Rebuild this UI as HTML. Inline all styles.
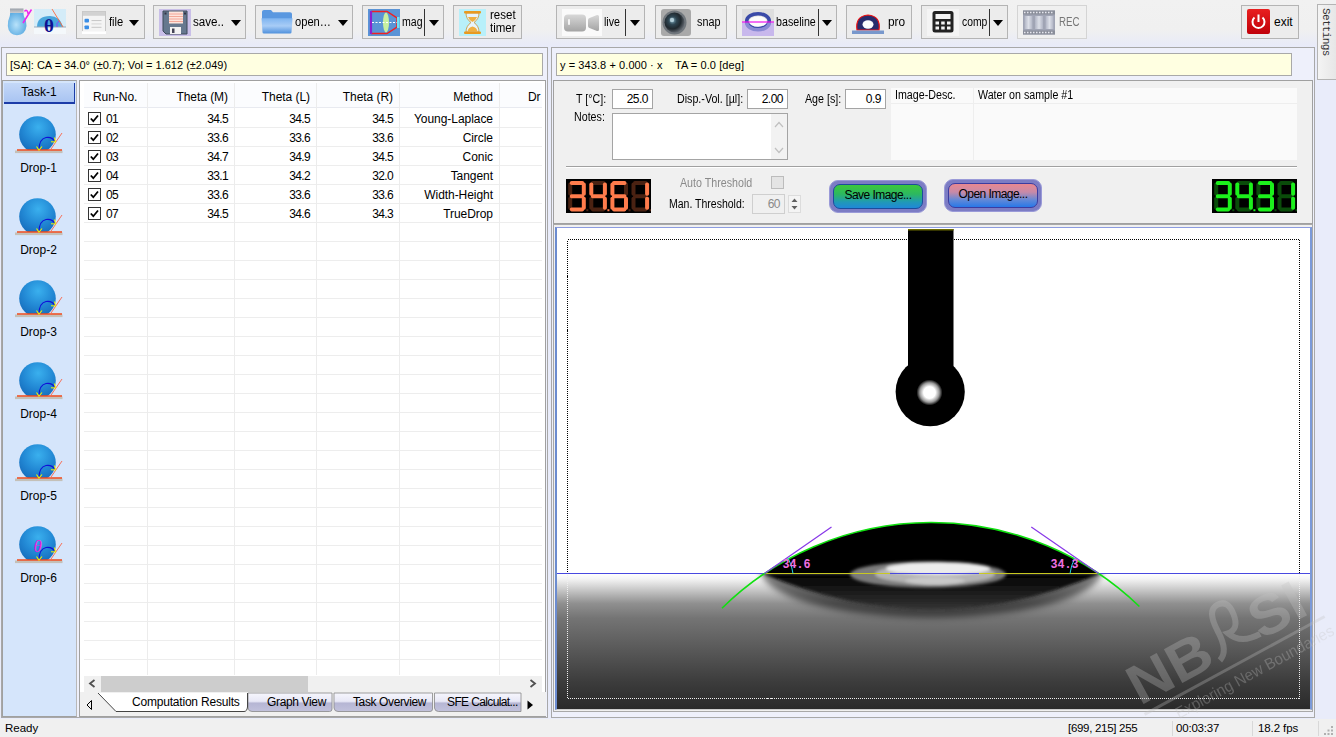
<!DOCTYPE html>
<html><head><meta charset="utf-8">
<style>
*{box-sizing:border-box;margin:0;padding:0}
html,body{width:1336px;height:737px;overflow:hidden}
body{position:relative;background:#e9ecfa;font-family:"Liberation Sans",sans-serif;font-size:12px;color:#000}
.abs{position:absolute}
#toolbar{position:absolute;left:0;top:0;width:1336px;height:47px;background:linear-gradient(#f1f1f1 0,#f0f0f0 30px,#e9ebf7 44px,#e8ebfa 47px)}
.tb{position:absolute;top:5px;height:34px;border:1px solid #b4b4b4;background:#ececec;font-size:12px}
.tb .lbl{position:absolute;top:9px;white-space:nowrap;transform-origin:left top;letter-spacing:0}
.tb .arr{position:absolute;top:14px;width:0;height:0;border-left:5px solid transparent;border-right:5px solid transparent;border-top:6px solid #000}
.tb .sep{position:absolute;top:3px;width:1px;height:27px;background:#333}
.tb svg{position:absolute}
/* panels */
.panel{position:absolute;background:#f0f0f0;border:1px solid #a0a0a0}
.n{letter-spacing:-0.65px}
.cb{width:13px;height:13px;border:1px solid #333;background:#fff}
.lb{font-size:12px;white-space:nowrap;transform:scaleX(0.89);transform-origin:left top}
.inp{height:20px;background:#fff;border:1px solid #a4a4a4;font-size:12px;line-height:18px;text-align:right;padding-right:4px;letter-spacing:-0.500px}
.ybox{position:absolute;background:#ffffe1;border:1px solid #a9a9a9;font-size:11px;line-height:23px;padding-left:3px;white-space:nowrap}
#status{position:absolute;left:0;top:719px;width:1336px;height:18px;background:#f0f0f0;font-size:11.5px}
</style></head><body>
<div id="toolbar"></div>
<!-- app icons -->
<svg class="abs" style="left:6px;top:6px" width="62" height="32" viewBox="0 0 62 32">
 <defs>
  <radialGradient id="gdrop" cx="0.45" cy="0.55" r="0.6"><stop offset="0" stop-color="#b8e2fa"/><stop offset="1" stop-color="#56a8e0"/></radialGradient>
  <linearGradient id="gcap" x1="0" y1="0" x2="0" y2="1"><stop offset="0" stop-color="#9aa0a8"/><stop offset="1" stop-color="#c8ccd2"/></linearGradient>
 </defs>
 <path d="M4.300 6 L17.300 6 L17.800 10 Q20.800 15 20.500 20 Q19.500 28.500 11 29.300 Q2.500 28.500 1.800 20 Q1.500 15 3.800 10 Z" fill="url(#gdrop)"/>
 <rect x="4" y="2.500" width="13.500" height="4.500" fill="url(#gcap)"/>
 <path d="M17 17 L25.500 3.500 M18.500 5.500 Q20 3 21.500 5.500 L22.500 9" stroke="#ee22ee" stroke-width="1.500" fill="none"/>
 <rect x="28" y="3" width="32" height="24" fill="#d4ecf8"/>
 <rect x="28" y="21" width="32" height="7" fill="#f4f8fb"/>
 <path d="M31 21 Q31 10 44 10 Q54 10 57 21 Z" fill="#4aa6dc"/>
 <path d="M28 21 L60 21" stroke="#9ab" stroke-width="1"/>
 <path d="M46 3 L57 21" stroke="#ff6a3a" stroke-width="0.900"/>
 <path d="M51 21 Q50 17 53 15" stroke="#8844ff" stroke-width="1" fill="none"/>
 <text x="38" y="26" font-family="Liberation Serif" font-size="19" font-weight="bold" fill="#101090">θ</text>
</svg>

<!-- file -->
<div class="tb" style="left:76px;width:69px">
 <svg style="left:5px;top:5px" width="24" height="23" viewBox="0 0 24 24" preserveAspectRatio="none">
  <rect x="0.5" y="0.5" width="23" height="21" fill="#f4f4f4" stroke="#c8c8c8"/>
  <rect x="1" y="1" width="22" height="4" fill="#d2d2d2"/>
  <rect x="0" y="21" width="24" height="3" fill="#fff"/>
  <rect x="2.5" y="8" width="4.5" height="4" rx="1" fill="#3a8ee6"/><rect x="2.5" y="15" width="4.5" height="4" rx="1" fill="#3a8ee6"/>
  <rect x="9.5" y="9.5" width="10" height="1" fill="#c4c4c4"/><rect x="9.5" y="13" width="10" height="1" fill="#d4d4d4"/><rect x="9.5" y="16.5" width="10" height="1" fill="#c4c4c4"/>
 </svg>
 <span class="lbl" style="left:32px;transform:scaleX(0.93)">file</span><span class="arr" style="left:52px"></span>
</div>

<!-- save -->
<div class="tb" style="left:153px;width:93px">
 <svg style="left:5px;top:3px" width="32" height="27" viewBox="0 0 32 27">
  <rect width="32" height="27" fill="#c9bfe8"/>
  <path d="M4 2 L28 2 L28 25 L7 25 L4 22 Z" fill="#66788e" stroke="#3c4858" stroke-width="1"/>
  <rect x="10" y="2.5" width="14" height="12" fill="#fde4dc"/>
  <path d="M10 5h14M10 7.5h14M10 10h14M10 12.500h14" stroke="#f0a090" stroke-width="0.9"/>
  <rect x="11" y="18" width="11" height="7" fill="#f2f2f2"/><rect x="13" y="19.500" width="2.500" height="4.500" fill="#445"/>
  <rect x="5.500" y="3.500" width="2" height="2" fill="#334"/><rect x="25" y="3.500" width="2" height="2" fill="#334"/>
 </svg>
 <span class="lbl" style="left:39px;transform:scaleX(0.97)">save..</span><span class="arr" style="left:77px"></span>
</div>

<!-- open -->
<div class="tb" style="left:255px;width:98px">
 <svg style="left:5px;top:3px" width="32" height="25" viewBox="0 0 32 27" preserveAspectRatio="none">
  <defs><linearGradient id="gfold" x1="0" y1="0" x2="0" y2="1"><stop offset="0" stop-color="#7eb4f0"/><stop offset="0.500" stop-color="#a8ccf6"/><stop offset="1" stop-color="#4e90dc"/></linearGradient></defs>
  <path d="M1 3 Q1 1 3 1 L10 1 L12 3.500 L29 3.500 Q31 3.500 31 5.500 L31 12 L1 12 Z" fill="#5a98e0"/>
  <path d="M0.500 10 L31.500 10 L30.500 25 Q30.500 26.500 29 26.500 L3 26.500 Q1.500 26.500 1.500 25 Z" fill="url(#gfold)"/>
 </svg>
 <span class="lbl" style="left:39px;transform:scaleX(0.93)">open…</span><span class="arr" style="left:82px"></span>
</div>

<!-- mag -->
<div class="tb" style="left:362px;width:82px">
 <svg style="left:5px;top:3px" width="32" height="27" viewBox="0 0 32 27">
  <rect width="32" height="27" fill="#5a94d6"/>
  <path d="M3 2.500 L19 2.500 L29 9 L29 18 L19 24.500 L3 24.500" fill="none" stroke="#f02020" stroke-width="1.400"/>
  <path d="M3 2 L3 25" stroke="#8a20d0" stroke-width="2.200"/>
  <ellipse cx="18" cy="13.500" rx="3" ry="10" fill="#c8f0a0"/>
  <path d="M4 13.500 L30 13.500" stroke="#fff" stroke-width="1" stroke-dasharray="2 1.500"/>
  <rect x="29" y="8" width="2.500" height="11" fill="#70e4f4"/>
 </svg>
 <span class="lbl" style="left:39px;transform:scaleX(0.88)">mag</span><span class="sep" style="left:61px"></span><span class="arr" style="left:66px"></span>
</div>

<!-- reset timer -->
<div class="tb" style="left:453px;width:69px">
 <svg style="left:5px;top:3px" width="27" height="27" viewBox="0 0 27 27">
  <rect width="27" height="27" fill="#b8f0fa"/>
  <path d="M7 4 L20 4 Q20 10 15 13.500 Q20 17 20 23 L7 23 Q7 17 12 13.500 Q7 10 7 4Z" fill="#e8f4fa" stroke="#c89030" stroke-width="0.800"/>
  <path d="M9 8 L18 8 Q17 11 13.500 13 Q10 11 9 8Z" fill="#f0b040"/>
  <path d="M8.500 22.500 Q9 18.500 13.500 17.500 Q18 18.500 18.500 22.500Z" fill="#f0b040"/>
  <rect x="5" y="2" width="17" height="2.500" rx="1" fill="#e89a20"/><rect x="5" y="22.500" width="17" height="2.500" rx="1" fill="#e89a20"/>
 </svg>
 <span class="lbl" style="left:36px;top:3px;line-height:12.5px;text-align:center;transform:scaleX(0.96)">reset<br>timer</span>
</div>

<!-- live -->
<div class="tb" style="left:556px;width:89px">
 <svg style="left:5px;top:3px" width="40" height="27" viewBox="0 0 40 27">
  <defs><linearGradient id="gcam" x1="0" y1="0" x2="0" y2="1"><stop offset="0" stop-color="#d8d8d8"/><stop offset="1" stop-color="#a4a4a4"/></linearGradient></defs>
  <rect width="40" height="27" fill="#fafafa"/>
  <rect x="2" y="5.500" width="22" height="17" rx="4" fill="url(#gcam)"/>
  <path d="M26 11 Q26 9.500 27.500 9 L35 6 Q37 5.500 37 7.500 L37 20.500 Q37 22.500 35 22 L27.500 19 Q26 18.500 26 17Z" fill="url(#gcam)"/>
  <rect x="6" y="10" width="2" height="6" rx="1" fill="#f4f4f4"/>
 </svg>
 <span class="lbl" style="left:47px;transform:scaleX(0.89)">live</span><span class="sep" style="left:68px"></span><span class="arr" style="left:73px"></span>
</div>

<!-- snap -->
<div class="tb" style="left:655px;width:72px">
 <svg style="left:5px;top:3px" width="30" height="27" viewBox="0 0 30 27">
  <defs><radialGradient id="glens" cx="0.400" cy="0.400" r="0.600"><stop offset="0" stop-color="#7aa6b8"/><stop offset="0.350" stop-color="#2e4450"/><stop offset="0.700" stop-color="#20282e"/><stop offset="1" stop-color="#5a6068"/></radialGradient></defs>
  <rect width="30" height="27" rx="3" fill="#a9a9a9"/>
  <circle cx="13.500" cy="13.500" r="12" fill="#70767c"/>
  <circle cx="13.500" cy="13.500" r="10" fill="url(#glens)"/>
  <circle cx="11" cy="11" r="2.200" fill="#c4dce6" opacity="0.800"/>
 </svg>
 <span class="lbl" style="left:41px;transform:scaleX(0.90)">snap</span>
</div>

<!-- baseline -->
<div class="tb" style="left:736px;width:101px">
 <svg style="left:5px;top:3px" width="32" height="27" viewBox="0 0 32 27">
  <rect width="32" height="27" fill="#dedede"/>
  <rect y="13.500" width="32" height="13.500" fill="#c8b8ec"/>
  <ellipse cx="16" cy="12" rx="11.300" ry="7.300" fill="none" stroke="#3a4aa8" stroke-width="3.500"/>
  <path d="M4.700 13.500 A11.300 7.300 0 0 0 27.300 13.500" fill="none" stroke="#8a8ad4" stroke-width="3.500"/>
  <ellipse cx="16" cy="12.500" rx="8.800" ry="5.200" fill="#fcfcfc"/>
  <path d="M0 13 L32 13" stroke="#ee10ee" stroke-width="1.200"/>
 </svg>
 <span class="lbl" style="left:39px;transform:scaleX(0.89)">baseline</span><span class="sep" style="left:81px"></span><span class="arr" style="left:85px"></span>
</div>

<!-- pro -->
<div class="tb" style="left:846px;width:66px">
 <svg style="left:5px;top:3px" width="32" height="27" viewBox="0 0 32 27">
  <path d="M5 21 Q3 7 16 6 Q29 7 27 21 Z" fill="#282c6c" stroke="#f01010" stroke-width="1.200"/>
  <ellipse cx="16" cy="15.500" rx="5.500" ry="4.200" fill="#fcfcfc"/>
  <rect x="0" y="21.500" width="32" height="3.500" fill="#7898cc"/>
 </svg>
 <span class="lbl" style="left:41px;transform:scaleX(0.99)">pro</span>
</div>

<!-- comp -->
<div class="tb" style="left:921px;width:87px">
 <svg style="left:5px;top:3px" width="32" height="27" viewBox="0 0 32 27">
  <rect width="32" height="27" fill="#f4f4f4"/>
  <rect x="5.500" y="2" width="21" height="21.500" rx="2.500" fill="#222"/>
  <rect x="8.500" y="5" width="15" height="5" fill="#f4f4f4"/>
  <g fill="#f4f4f4"><rect x="8.500" y="12.500" width="3.500" height="3"/><rect x="14.200" y="12.500" width="3.500" height="3"/><rect x="20" y="12.500" width="3.500" height="3"/><rect x="8.500" y="17.500" width="3.500" height="3"/><rect x="14.200" y="17.500" width="3.500" height="3"/><rect x="20" y="17.500" width="3.500" height="3"/></g>
 </svg>
 <span class="lbl" style="left:40px;transform:scaleX(0.86)">comp</span><span class="sep" style="left:67px"></span><span class="arr" style="left:71px"></span>
</div>

<!-- REC -->
<div class="tb" style="left:1017px;width:70px;border-color:#d4d4d4;background:#f0f0f0">
 <svg style="left:5px;top:3px" width="32" height="27" viewBox="0 0 32 27">
  <defs><linearGradient id="gfilm" x1="0" y1="0" x2="1" y2="0"><stop offset="0" stop-color="#b0b4c4"/><stop offset="0.500" stop-color="#dcdfe8"/><stop offset="1" stop-color="#b0b4c4"/></linearGradient></defs>
  <rect x="0" y="1.500" width="32" height="24" fill="#a0a4b4"/>
  <rect x="0" y="1.500" width="32" height="4" fill="#8a8e9a"/><rect x="0" y="21.500" width="32" height="4" fill="#8a8e9a"/>
  <path d="M1 3.500 H31" stroke="#e8e8f0" stroke-width="1.600" stroke-dasharray="1.500 1.500"/><path d="M1 23.500 H31" stroke="#e8e8f0" stroke-width="1.600" stroke-dasharray="1.500 1.500"/>
  <rect x="1.500" y="7" width="8" height="13" fill="url(#gfilm)"/><rect x="12" y="7" width="8" height="13" fill="url(#gfilm)"/><rect x="22.500" y="7" width="8" height="13" fill="url(#gfilm)"/>
 </svg>
 <span class="lbl" style="left:41px;color:#777;transform:scaleX(0.81)">REC</span>
</div>

<!-- exit -->
<div class="tb" style="left:1241px;width:58px">
 <svg style="left:5px;top:3px" width="23" height="27" viewBox="0 0 23 27">
  <defs><linearGradient id="gexit" x1="0" y1="0" x2="0" y2="1"><stop offset="0" stop-color="#e82020"/><stop offset="1" stop-color="#c00008"/></linearGradient></defs>
  <rect width="23" height="25" rx="2" fill="url(#gexit)"/>
  <path d="M7.500 8.500 A6 6 0 1 0 15.500 8.500" fill="none" stroke="#fff" stroke-width="2"/>
  <path d="M11.500 5.500 V13" stroke="#fff" stroke-width="2"/>
 </svg>
 <span class="lbl" style="left:32px;transform:scaleX(1.00)">exit</span>
</div>

<!-- LEFT -->
<div class="panel" style="left:1px;top:47px;width:547px;height:671px;background:#eef0fb;border-color:#a8a8a8"></div>
<div class="ybox" style="left:6px;top:53px;width:537px;height:23px">[SA]: CA = 34.0° (±0.7); Vol = 1.612 (±2.049)</div>
<svg width="0" height="0" style="position:absolute"><defs>
<radialGradient id="gsph" cx="0.520" cy="0.300" r="0.750"><stop offset="0" stop-color="#3ab0ee"/><stop offset="0.550" stop-color="#2288d4"/><stop offset="1" stop-color="#1468b8"/></radialGradient>
<clipPath id="cpS"><rect x="0" y="0" width="50" height="35"/></clipPath></defs></svg>
<div class="abs" style="left:2px;top:80px;width:75px;height:637px;background:#d5e5fb;border:1px solid #a0a0a0;border-right-color:#b8b8b8"></div>
<div class="abs" style="left:4px;top:83px;width:71px;height:21px;background:linear-gradient(#c4d8f8,#a9c4f2);border-bottom:2px solid #1c3ca8;border-right:1px solid #1c3ca8;text-align:center;font-size:12px;line-height:19px">Task-1</div>
<svg class="abs" style="left:14px;top:115px" width="50" height="40" viewBox="0 0 50 40">
<circle cx="23.500" cy="19.500" r="18.300" fill="url(#gsph)" clip-path="url(#cpS)"/>
<rect x="1" y="35.500" width="47.500" height="2.600" fill="#c4c0b8"/>
<path d="M3 35 H48" stroke="#f04818" stroke-width="1.400"/>
<path d="M36 35.500 L48 18" stroke="#f87058" stroke-width="1"/>
<path d="M25 35 Q25 24 32 22.500 Q38 21.500 41 26.500" fill="none" stroke="#1010d8" stroke-width="1.100"/>
<path d="M22.500 31.500 L25 35 L28 31.500 M37 26.800 L41.500 27 L40.500 22.500" fill="none" stroke="#f4f000" stroke-width="1.100"/>
</svg>
<div class="abs" style="left:2px;top:161px;width:73px;text-align:center;font-size:12px">Drop-1</div>
<svg class="abs" style="left:14px;top:197px" width="50" height="40" viewBox="0 0 50 40">
<circle cx="23.500" cy="19.500" r="18.300" fill="url(#gsph)" clip-path="url(#cpS)"/>
<rect x="1" y="35.500" width="47.500" height="2.600" fill="#c4c0b8"/>
<path d="M3 35 H48" stroke="#f04818" stroke-width="1.400"/>
<path d="M36 35.500 L48 18" stroke="#f87058" stroke-width="1"/>
<path d="M25 35 Q25 24 32 22.500 Q38 21.500 41 26.500" fill="none" stroke="#1010d8" stroke-width="1.100"/>
<path d="M22.500 31.500 L25 35 L28 31.500 M37 26.800 L41.500 27 L40.500 22.500" fill="none" stroke="#f4f000" stroke-width="1.100"/>
</svg>
<div class="abs" style="left:2px;top:243px;width:73px;text-align:center;font-size:12px">Drop-2</div>
<svg class="abs" style="left:14px;top:279px" width="50" height="40" viewBox="0 0 50 40">
<circle cx="23.500" cy="19.500" r="18.300" fill="url(#gsph)" clip-path="url(#cpS)"/>
<rect x="1" y="35.500" width="47.500" height="2.600" fill="#c4c0b8"/>
<path d="M3 35 H48" stroke="#f04818" stroke-width="1.400"/>
<path d="M36 35.500 L48 18" stroke="#f87058" stroke-width="1"/>
<path d="M25 35 Q25 24 32 22.500 Q38 21.500 41 26.500" fill="none" stroke="#1010d8" stroke-width="1.100"/>
<path d="M22.500 31.500 L25 35 L28 31.500 M37 26.800 L41.500 27 L40.500 22.500" fill="none" stroke="#f4f000" stroke-width="1.100"/>
</svg>
<div class="abs" style="left:2px;top:325px;width:73px;text-align:center;font-size:12px">Drop-3</div>
<svg class="abs" style="left:14px;top:361px" width="50" height="40" viewBox="0 0 50 40">
<circle cx="23.500" cy="19.500" r="18.300" fill="url(#gsph)" clip-path="url(#cpS)"/>
<rect x="1" y="35.500" width="47.500" height="2.600" fill="#c4c0b8"/>
<path d="M3 35 H48" stroke="#f04818" stroke-width="1.400"/>
<path d="M36 35.500 L48 18" stroke="#f87058" stroke-width="1"/>
<path d="M25 35 Q25 24 32 22.500 Q38 21.500 41 26.500" fill="none" stroke="#1010d8" stroke-width="1.100"/>
<path d="M22.500 31.500 L25 35 L28 31.500 M37 26.800 L41.500 27 L40.500 22.500" fill="none" stroke="#f4f000" stroke-width="1.100"/>
</svg>
<div class="abs" style="left:2px;top:407px;width:73px;text-align:center;font-size:12px">Drop-4</div>
<svg class="abs" style="left:14px;top:443px" width="50" height="40" viewBox="0 0 50 40">
<circle cx="23.500" cy="19.500" r="18.300" fill="url(#gsph)" clip-path="url(#cpS)"/>
<rect x="1" y="35.500" width="47.500" height="2.600" fill="#c4c0b8"/>
<path d="M3 35 H48" stroke="#f04818" stroke-width="1.400"/>
<path d="M36 35.500 L48 18" stroke="#f87058" stroke-width="1"/>
<path d="M25 35 Q25 24 32 22.500 Q38 21.500 41 26.500" fill="none" stroke="#1010d8" stroke-width="1.100"/>
<path d="M22.500 31.500 L25 35 L28 31.500 M37 26.800 L41.500 27 L40.500 22.500" fill="none" stroke="#f4f000" stroke-width="1.100"/>
</svg>
<div class="abs" style="left:2px;top:489px;width:73px;text-align:center;font-size:12px">Drop-5</div>
<svg class="abs" style="left:14px;top:525px" width="50" height="40" viewBox="0 0 50 40">
<circle cx="23.500" cy="19.500" r="18.300" fill="url(#gsph)" clip-path="url(#cpS)"/>
<rect x="1" y="35.500" width="47.500" height="2.600" fill="#c4c0b8"/>
<path d="M3 35 H48" stroke="#f04818" stroke-width="1.400"/>
<path d="M36 35.500 L48 18" stroke="#f87058" stroke-width="1"/>
<path d="M25 35 Q25 24 32 22.500 Q38 21.500 41 26.500" fill="none" stroke="#1010d8" stroke-width="1.100"/>
<path d="M22.500 31.500 L25 35 L28 31.500 M37 26.800 L41.500 27 L40.500 22.500" fill="none" stroke="#f4f000" stroke-width="1.100"/>
<text x="19.500" y="27" font-family="Liberation Serif" font-style="italic" font-size="17" fill="#f020e0">θ</text></svg>
<div class="abs" style="left:2px;top:571px;width:73px;text-align:center;font-size:12px">Drop-6</div>

<div class="abs" style="left:79px;top:80px;width:467px;height:637px;background:#fff;border:1px solid #a0a0a0;overflow:hidden"></div>
<div class="abs" id="tbl" style="letter-spacing:-0.05px;left:84px;top:83px;width:458px;height:592px;overflow:hidden;font-size:12px;background:#fff">
<div class="abs" style="left:0;top:0;width:458px;height:25px;background:#fbfcfe;border-bottom:1px solid #e8eaf0"></div>
<div class="abs" style="left:0;top:44px;width:458px;height:1px;background:#ededed"></div><div class="abs" style="left:0;top:63px;width:458px;height:1px;background:#ededed"></div><div class="abs" style="left:0;top:82px;width:458px;height:1px;background:#ededed"></div><div class="abs" style="left:0;top:101px;width:458px;height:1px;background:#ededed"></div><div class="abs" style="left:0;top:120px;width:458px;height:1px;background:#ededed"></div><div class="abs" style="left:0;top:139px;width:458px;height:1px;background:#ededed"></div><div class="abs" style="left:0;top:158px;width:458px;height:1px;background:#ededed"></div><div class="abs" style="left:0;top:177px;width:458px;height:1px;background:#ededed"></div><div class="abs" style="left:0;top:196px;width:458px;height:1px;background:#ededed"></div><div class="abs" style="left:0;top:215px;width:458px;height:1px;background:#ededed"></div><div class="abs" style="left:0;top:234px;width:458px;height:1px;background:#ededed"></div><div class="abs" style="left:0;top:253px;width:458px;height:1px;background:#ededed"></div><div class="abs" style="left:0;top:272px;width:458px;height:1px;background:#ededed"></div><div class="abs" style="left:0;top:291px;width:458px;height:1px;background:#ededed"></div><div class="abs" style="left:0;top:310px;width:458px;height:1px;background:#ededed"></div><div class="abs" style="left:0;top:329px;width:458px;height:1px;background:#ededed"></div><div class="abs" style="left:0;top:348px;width:458px;height:1px;background:#ededed"></div><div class="abs" style="left:0;top:367px;width:458px;height:1px;background:#ededed"></div><div class="abs" style="left:0;top:386px;width:458px;height:1px;background:#ededed"></div><div class="abs" style="left:0;top:405px;width:458px;height:1px;background:#ededed"></div><div class="abs" style="left:0;top:424px;width:458px;height:1px;background:#ededed"></div><div class="abs" style="left:0;top:443px;width:458px;height:1px;background:#ededed"></div><div class="abs" style="left:0;top:462px;width:458px;height:1px;background:#ededed"></div><div class="abs" style="left:0;top:481px;width:458px;height:1px;background:#ededed"></div><div class="abs" style="left:0;top:500px;width:458px;height:1px;background:#ededed"></div><div class="abs" style="left:0;top:519px;width:458px;height:1px;background:#ededed"></div><div class="abs" style="left:0;top:538px;width:458px;height:1px;background:#ededed"></div><div class="abs" style="left:0;top:557px;width:458px;height:1px;background:#ededed"></div><div class="abs" style="left:0;top:576px;width:458px;height:1px;background:#ededed"></div>
<div class="abs" style="left:63px;top:0;width:1px;height:592px;background:#ececec"></div><div class="abs" style="left:150px;top:0;width:1px;height:592px;background:#ececec"></div><div class="abs" style="left:232px;top:0;width:1px;height:592px;background:#ececec"></div><div class="abs" style="left:315px;top:0;width:1px;height:592px;background:#ececec"></div><div class="abs" style="left:415px;top:0;width:1px;height:592px;background:#ececec"></div>
<span class="abs" style="left:9px;top:7px">Run-No.</span><span class="abs" style="right:314px;top:7px">Theta (M)</span><span class="abs" style="right:232px;top:7px">Theta (L)</span><span class="abs" style="right:149px;top:7px">Theta (R)</span><span class="abs" style="right:49px;top:7px">Method</span><span class="abs" style="left:444px;top:7px">Dr</span>
<span class="abs cb" style="left:4px;top:29px"></span><svg class="abs" style="left:5px;top:30px" width="11" height="11" viewBox="0 0 11 11"><path d="M1.800 5.500 L4.300 8.200 L9 2.500" fill="none" stroke="#000" stroke-width="1.800"/></svg><span class="abs n" style="left:22px;top:29px">01</span><span class="abs n" style="right:314px;top:29px">34.5</span><span class="abs n" style="right:232px;top:29px">34.5</span><span class="abs n" style="right:149px;top:29px">34.5</span><span class="abs" style="right:49px;top:29px">Young-Laplace</span>
<span class="abs cb" style="left:4px;top:48px"></span><svg class="abs" style="left:5px;top:49px" width="11" height="11" viewBox="0 0 11 11"><path d="M1.800 5.500 L4.300 8.200 L9 2.500" fill="none" stroke="#000" stroke-width="1.800"/></svg><span class="abs n" style="left:22px;top:48px">02</span><span class="abs n" style="right:314px;top:48px">33.6</span><span class="abs n" style="right:232px;top:48px">33.6</span><span class="abs n" style="right:149px;top:48px">33.6</span><span class="abs" style="right:49px;top:48px">Circle</span>
<span class="abs cb" style="left:4px;top:67px"></span><svg class="abs" style="left:5px;top:68px" width="11" height="11" viewBox="0 0 11 11"><path d="M1.800 5.500 L4.300 8.200 L9 2.500" fill="none" stroke="#000" stroke-width="1.800"/></svg><span class="abs n" style="left:22px;top:67px">03</span><span class="abs n" style="right:314px;top:67px">34.7</span><span class="abs n" style="right:232px;top:67px">34.9</span><span class="abs n" style="right:149px;top:67px">34.5</span><span class="abs" style="right:49px;top:67px">Conic</span>
<span class="abs cb" style="left:4px;top:86px"></span><svg class="abs" style="left:5px;top:87px" width="11" height="11" viewBox="0 0 11 11"><path d="M1.800 5.500 L4.300 8.200 L9 2.500" fill="none" stroke="#000" stroke-width="1.800"/></svg><span class="abs n" style="left:22px;top:86px">04</span><span class="abs n" style="right:314px;top:86px">33.1</span><span class="abs n" style="right:232px;top:86px">34.2</span><span class="abs n" style="right:149px;top:86px">32.0</span><span class="abs" style="right:49px;top:86px">Tangent</span>
<span class="abs cb" style="left:4px;top:105px"></span><svg class="abs" style="left:5px;top:106px" width="11" height="11" viewBox="0 0 11 11"><path d="M1.800 5.500 L4.300 8.200 L9 2.500" fill="none" stroke="#000" stroke-width="1.800"/></svg><span class="abs n" style="left:22px;top:105px">05</span><span class="abs n" style="right:314px;top:105px">33.6</span><span class="abs n" style="right:232px;top:105px">33.6</span><span class="abs n" style="right:149px;top:105px">33.6</span><span class="abs" style="right:49px;top:105px">Width-Height</span>
<span class="abs cb" style="left:4px;top:124px"></span><svg class="abs" style="left:5px;top:125px" width="11" height="11" viewBox="0 0 11 11"><path d="M1.800 5.500 L4.300 8.200 L9 2.500" fill="none" stroke="#000" stroke-width="1.800"/></svg><span class="abs n" style="left:22px;top:124px">07</span><span class="abs n" style="right:314px;top:124px">34.5</span><span class="abs n" style="right:232px;top:124px">34.6</span><span class="abs n" style="right:149px;top:124px">34.3</span><span class="abs" style="right:49px;top:124px">TrueDrop</span>
</div>
<div class="abs" style="left:84px;top:676px;width:458px;height:16px;background:#f0f0f0"></div>
<div class="abs" style="left:101px;top:676px;width:207px;height:16px;background:#cdcdcd"></div>
<svg class="abs" style="left:88px;top:679px" width="8" height="9" viewBox="0 0 8 9"><path d="M6.500 1 L2 4.500 L6.500 8" fill="none" stroke="#505050" stroke-width="1.800"/></svg>
<svg class="abs" style="left:529px;top:679px" width="8" height="9" viewBox="0 0 8 9"><path d="M1.500 1 L6 4.500 L1.500 8" fill="none" stroke="#505050" stroke-width="1.800"/></svg>
<div class="abs" style="left:80px;top:692px;width:466px;height:24px;background:#f0f0f0"></div>
<svg class="abs" style="left:80px;top:692px" width="466" height="24" viewBox="0 0 466 24">
<defs><linearGradient id="gtab" x1="0" y1="0" x2="0" y2="1"><stop offset="0" stop-color="#f6f6fd"/><stop offset="0.450" stop-color="#e8e8f6"/><stop offset="0.550" stop-color="#b6b6d4"/><stop offset="1" stop-color="#c2c2dc"/></linearGradient></defs>
<path d="M168 1 H252 V17 Q252 19.500 249.500 19.500 H172 Q168.500 19.500 168 16 Z" fill="url(#gtab)" stroke="#888" stroke-width="0.800"/>
<path d="M254 1 H352.500 V17 Q352.500 19.500 350 19.500 H258 Q254.500 19.500 254 16 Z" fill="url(#gtab)" stroke="#888" stroke-width="0.800"/>
<path d="M354.500 1 H441 V19.500 H358.500 Q355 19.500 354.500 16 Z" fill="url(#gtab)" stroke="#888" stroke-width="0.800"/>
<path d="M18 1 L36 19.500 H164 Q167 19.500 167.500 15 V1 Z" fill="#fff"/>
<path d="M18 1 L36 19.500 H164 Q167 19.500 167.500 15 V1" fill="none" stroke="#444" stroke-width="1"/>
<path d="M11.500 8.500 L7 13 L11.500 17.500 Z" fill="none" stroke="#000" stroke-width="1"/>
<path d="M447.500 8.500 L453 13 L447.500 17.500 Z" fill="#000"/>
</svg>
<span class="abs" style="left:132px;top:695px;font-size:12px;letter-spacing:-0.2px">Computation Results</span>
<span class="abs" style="left:267px;top:695px;font-size:12px;letter-spacing:-0.35px">Graph View</span>
<span class="abs" style="left:353px;top:695px;font-size:12px;letter-spacing:-0.38px">Task Overview</span>
<span class="abs" style="left:447px;top:695px;font-size:12px;letter-spacing:-0.62px">SFE Calculat...</span>

<!-- RIGHT -->
<div class="panel" style="left:551px;top:47px;width:764px;height:671px;background:#eef0fb;border-color:#a8a8a8"></div>
<div class="ybox" style="left:556px;top:53px;width:736px;height:23px"><span style="letter-spacing:0.08px">y = 343.8 + 0.000 · x&nbsp;&nbsp;&nbsp; TA = 0.0 [deg]</span></div>
<div class="abs" style="left:553px;top:80px;width:760px;height:144px;background:#f0f0f0;border:1px solid #a0a0a0"></div>
<span class="abs lb" style="left:576px;top:92px">T [°C]:</span>
<div class="abs inp" style="left:612px;top:89px;width:41px">25.0</div>
<span class="abs lb" style="left:677px;top:92px">Disp.-Vol. [µl]:</span>
<div class="abs inp" style="left:747px;top:89px;width:41px">2.00</div>
<span class="abs lb" style="left:805px;top:92px">Age [s]:</span>
<div class="abs inp" style="left:845px;top:89px;width:41px">0.9</div>
<span class="abs lb" style="left:574px;top:110px">Notes:</span>
<div class="abs" style="left:612px;top:113px;width:176px;height:47px;background:#fff;border:1px solid #a4a4a4"></div>
<div class="abs" style="left:771px;top:114px;width:16px;height:45px;background:#f2f2f2"></div>
<svg class="abs" style="left:774px;top:120px" width="10" height="36" viewBox="0 0 10 36"><path d="M1 7 L5 2.500 L9 7" fill="none" stroke="#c0c0c0" stroke-width="1.200"/><path d="M1 28 L5 32.500 L9 28" fill="none" stroke="#c0c0c0" stroke-width="1.200"/></svg>
<div class="abs" style="left:891px;top:88px;width:406px;height:72px;background:#fafafa"></div>
<div class="abs" style="left:891px;top:103px;width:406px;height:1px;background:#eeeeee"></div>
<div class="abs" style="left:973px;top:88px;width:1px;height:72px;background:#eeeeee"></div>
<span class="abs lb" style="left:895px;top:88px">Image-Desc.</span>
<span class="abs lb" style="left:978px;top:88px">Water on sample #1</span>
<div class="abs" style="left:566px;top:166px;width:731px;height:2px;border-top:1px solid #a0a0a0;border-bottom:1px solid #fff"></div>
<span class="abs lb" style="left:680px;top:176px;color:#8a8a8a">Auto Threshold</span>
<div class="abs" style="left:771px;top:176px;width:13px;height:13px;background:#e4e4e4;border:1px solid #bcbcbc"></div>
<span class="abs lb" style="left:669px;top:197px;transform:scaleX(0.875)">Man. Threshold:</span>
<div class="abs" style="left:752px;top:194px;width:33px;height:20px;background:#f0f0f0;border:1px solid #cfcfcf;color:#8a8a8a;font-size:12px;line-height:18px;text-align:right;padding-right:4px;letter-spacing:-0.500px">60</div>
<div class="abs" style="left:788px;top:195px;width:13px;height:18px;background:#f4f4f4;border:1px solid #dcdcdc"></div>
<svg class="abs" style="left:791px;top:198px" width="7" height="12" viewBox="0 0 7 12"><path d="M0.500 4 L3.500 0.500 L6.500 4Z M0.500 8 L3.500 11.500 L6.500 8Z" fill="#606060"/></svg>
<div class="abs" style="left:829px;top:180px;width:98px;height:33px;border-radius:9px;background:#7c7cc4;border:1px solid #9a9ad8"></div>
<div class="abs" style="left:833px;top:184px;width:90px;height:25px;border-radius:7px;background:linear-gradient(#3cc83c 0,#2cb860 40%,#2098b8 75%,#2088d8 100%);border:1px solid #1c4c9c;text-align:center;font-size:12px;line-height:21px;letter-spacing:-0.550px">Save Image...</div>
<div class="abs" style="left:944px;top:179px;width:98px;height:33px;border-radius:9px;background:#7c7cc4;border:1px solid #9a9ad8"></div>
<div class="abs" style="left:948px;top:183px;width:90px;height:25px;border-radius:7px;background:linear-gradient(#e88890 0,#c88aa8 35%,#6088d8 70%,#2878e8 100%);border:1px solid #3c3ca0;text-align:center;font-size:12px;line-height:21px;letter-spacing:-0.550px">Open Image...</div>
<svg class="abs" style="left:566px;top:179px" width="85" height="34" viewBox="0 0 85 34"><rect width="85" height="34" fill="#000"/><g transform="translate(2.2,2)"><rect x="0.0" y="1.6" width="4.0" height="13.1" rx="1.8" fill="#4a2212"/><rect x="0.0" y="15.7" width="4.0" height="13.1" rx="1.8" fill="#4a2212"/><rect x="1.6" y="0.0" width="14.4" height="4.0" rx="1.8" fill="#ff7c4c"/><rect x="1.6" y="26.4" width="14.4" height="4.0" rx="1.8" fill="#ff7c4c"/><rect x="1.6" y="13.2" width="14.4" height="4.0" rx="1.8" fill="#ff7c4c"/><rect x="13.6" y="1.6" width="4.0" height="13.1" rx="1.8" fill="#ff7c4c"/><rect x="13.6" y="15.7" width="4.0" height="13.1" rx="1.8" fill="#ff7c4c"/><rect x="22.7" y="0.0" width="14.4" height="4.0" rx="1.8" fill="#4a2212"/><rect x="22.7" y="26.4" width="14.4" height="4.0" rx="1.8" fill="#4a2212"/><rect x="21.1" y="15.7" width="4.0" height="13.1" rx="1.8" fill="#4a2212"/><rect x="22.7" y="13.2" width="14.4" height="4.0" rx="1.8" fill="#ff7c4c"/><rect x="21.1" y="1.6" width="4.0" height="13.1" rx="1.8" fill="#ff7c4c"/><rect x="34.7" y="1.6" width="4.0" height="13.1" rx="1.8" fill="#ff7c4c"/><rect x="34.7" y="15.7" width="4.0" height="13.1" rx="1.8" fill="#ff7c4c"/><rect x="55.8" y="1.6" width="4.0" height="13.1" rx="1.8" fill="#4a2212"/><rect x="43.8" y="0.0" width="14.4" height="4.0" rx="1.8" fill="#ff7c4c"/><rect x="43.8" y="26.4" width="14.4" height="4.0" rx="1.8" fill="#ff7c4c"/><rect x="43.8" y="13.2" width="14.4" height="4.0" rx="1.8" fill="#ff7c4c"/><rect x="42.2" y="1.6" width="4.0" height="13.1" rx="1.8" fill="#ff7c4c"/><rect x="42.2" y="15.7" width="4.0" height="13.1" rx="1.8" fill="#ff7c4c"/><rect x="55.8" y="15.7" width="4.0" height="13.1" rx="1.8" fill="#ff7c4c"/><rect x="64.9" y="0.0" width="14.4" height="4.0" rx="1.8" fill="#4a2212"/><rect x="64.9" y="26.4" width="14.4" height="4.0" rx="1.8" fill="#4a2212"/><rect x="64.9" y="13.2" width="14.4" height="4.0" rx="1.8" fill="#4a2212"/><rect x="63.3" y="1.6" width="4.0" height="13.1" rx="1.8" fill="#4a2212"/><rect x="63.3" y="15.7" width="4.0" height="13.1" rx="1.8" fill="#4a2212"/><rect x="76.9" y="1.6" width="4.0" height="13.1" rx="1.8" fill="#ff7c4c"/><rect x="76.9" y="15.7" width="4.0" height="13.1" rx="1.8" fill="#ff7c4c"/><rect x="18.1" y="28.2" width="2" height="2" fill="#4a2212"/><rect x="39.2" y="28.2" width="2" height="2" fill="#ff7c4c"/><rect x="60.3" y="28.2" width="2" height="2" fill="#4a2212"/><rect x="81.4" y="28.2" width="2" height="2" fill="#4a2212"/></g></svg>
<svg class="abs" style="left:1212px;top:179px" width="85" height="34" viewBox="0 0 85 34"><rect width="85" height="34" fill="#000"/><g transform="translate(2.2,2)"><rect x="0.0" y="1.6" width="4.0" height="13.1" rx="1.8" fill="#0a4c0a"/><rect x="0.0" y="15.7" width="4.0" height="13.1" rx="1.8" fill="#0a4c0a"/><rect x="1.6" y="0.0" width="14.4" height="4.0" rx="1.8" fill="#1cf01c"/><rect x="1.6" y="26.4" width="14.4" height="4.0" rx="1.8" fill="#1cf01c"/><rect x="1.6" y="13.2" width="14.4" height="4.0" rx="1.8" fill="#1cf01c"/><rect x="13.6" y="1.6" width="4.0" height="13.1" rx="1.8" fill="#1cf01c"/><rect x="13.6" y="15.7" width="4.0" height="13.1" rx="1.8" fill="#1cf01c"/><rect x="22.7" y="0.0" width="14.4" height="4.0" rx="1.8" fill="#0a4c0a"/><rect x="22.7" y="26.4" width="14.4" height="4.0" rx="1.8" fill="#0a4c0a"/><rect x="21.1" y="15.7" width="4.0" height="13.1" rx="1.8" fill="#0a4c0a"/><rect x="22.7" y="13.2" width="14.4" height="4.0" rx="1.8" fill="#1cf01c"/><rect x="21.1" y="1.6" width="4.0" height="13.1" rx="1.8" fill="#1cf01c"/><rect x="34.7" y="1.6" width="4.0" height="13.1" rx="1.8" fill="#1cf01c"/><rect x="34.7" y="15.7" width="4.0" height="13.1" rx="1.8" fill="#1cf01c"/><rect x="42.2" y="1.6" width="4.0" height="13.1" rx="1.8" fill="#0a4c0a"/><rect x="42.2" y="15.7" width="4.0" height="13.1" rx="1.8" fill="#0a4c0a"/><rect x="43.8" y="0.0" width="14.4" height="4.0" rx="1.8" fill="#1cf01c"/><rect x="43.8" y="26.4" width="14.4" height="4.0" rx="1.8" fill="#1cf01c"/><rect x="43.8" y="13.2" width="14.4" height="4.0" rx="1.8" fill="#1cf01c"/><rect x="55.8" y="1.6" width="4.0" height="13.1" rx="1.8" fill="#1cf01c"/><rect x="55.8" y="15.7" width="4.0" height="13.1" rx="1.8" fill="#1cf01c"/><rect x="64.9" y="0.0" width="14.4" height="4.0" rx="1.8" fill="#0a4c0a"/><rect x="64.9" y="26.4" width="14.4" height="4.0" rx="1.8" fill="#0a4c0a"/><rect x="64.9" y="13.2" width="14.4" height="4.0" rx="1.8" fill="#0a4c0a"/><rect x="63.3" y="1.6" width="4.0" height="13.1" rx="1.8" fill="#0a4c0a"/><rect x="63.3" y="15.7" width="4.0" height="13.1" rx="1.8" fill="#0a4c0a"/><rect x="76.9" y="1.6" width="4.0" height="13.1" rx="1.8" fill="#1cf01c"/><rect x="76.9" y="15.7" width="4.0" height="13.1" rx="1.8" fill="#1cf01c"/><rect x="18.1" y="28.2" width="2" height="2" fill="#0a4c0a"/><rect x="39.2" y="28.2" width="2" height="2" fill="#1cf01c"/><rect x="60.3" y="28.2" width="2" height="2" fill="#0a4c0a"/><rect x="81.4" y="28.2" width="2" height="2" fill="#0a4c0a"/></g></svg>

<div class="abs" style="left:553px;top:224px;width:760px;height:488px;background:#f0f0f0;border:1px solid #a8a8a8"></div>
<div class="abs" style="left:555px;top:227px;width:757px;height:483px;background:#fff;border:2px solid #6c8cd0;border-right-color:#7c9ad8;border-bottom:1px solid #ccc;border-top:1px solid #8c9ce0"></div>
<svg class="abs" style="left:557px;top:229px" width="753" height="480" viewBox="0 0 753 480">
<defs>
<linearGradient id="gsurf" x1="0" y1="0" x2="0" y2="1">
 <stop offset="0" stop-color="#ffffff"/><stop offset="0.040" stop-color="#f4f4f4"/><stop offset="0.120" stop-color="#c8c8c8"/><stop offset="0.220" stop-color="#909090"/><stop offset="0.330" stop-color="#747474"/>
 <stop offset="0.550" stop-color="#5a5a5a"/><stop offset="0.800" stop-color="#3c3c3c"/><stop offset="1" stop-color="#2a2a2a"/>
</linearGradient>
<radialGradient id="ghl" cx="0.500" cy="0.500" r="0.500"><stop offset="0" stop-color="#fff"/><stop offset="0.450" stop-color="#fff"/><stop offset="0.750" stop-color="#999"/><stop offset="1" stop-color="#000"/></radialGradient>
<radialGradient id="gref" cx="0.500" cy="0" r="1" gradientTransform="matrix(1 0 0 1 0 0)"><stop offset="0" stop-color="#000"/><stop offset="0.550" stop-color="#000" stop-opacity="0.950"/><stop offset="0.800" stop-color="#000" stop-opacity="0.500"/><stop offset="1" stop-color="#000" stop-opacity="0"/></radialGradient>
<linearGradient id="grefl" x1="0" y1="0" x2="0" y2="1"><stop offset="0" stop-color="#000"/><stop offset="1" stop-color="#343434"/></linearGradient>
<filter id="blur3"><feGaussianBlur stdDeviation="3"/></filter>
<filter id="blur2"><feGaussianBlur stdDeviation="1.800"/></filter>
<filter id="blur1"><feGaussianBlur stdDeviation="0.700"/></filter>
<clipPath id="cpBelow"><rect x="0" y="344.5" width="753" height="200"/></clipPath>
<clipPath id="cpAbove"><rect x="0" y="0" width="753" height="344.5"/></clipPath>
</defs>
<rect x="0" y="344.5" width="753" height="135.5" fill="url(#gsurf)"/>
<g clip-path="url(#cpBelow)"><ellipse cx="374.5" cy="340.5" rx="171.0" ry="48.0" fill="#000" filter="url(#blur3)" opacity="0.500"/><path d="M205.5 344.5 Q374.5 416.5 543.6 344.5 Z" fill="url(#grefl)" filter="url(#blur2)"/></g>
<path d="M207.5 344.5 A299.1 299.1 0 0 1 541.6 344.5 Z" fill="#000"/>
<g filter="url(#blur2)"><ellipse cx="371.0" cy="345.5" rx="78" ry="13" fill="#7c7c7c"/><ellipse cx="378.0" cy="345.0" rx="60" ry="10" fill="#b4b4b4"/><ellipse cx="381.0" cy="339.5" rx="52" ry="6.500" fill="#ececec"/><ellipse cx="378.0" cy="352.0" rx="30" ry="4" fill="#c8c8c8"/></g>
<rect x="351.0" y="0" width="45.5" height="143.0" fill="#000"/>
<rect x="351.0" y="0" width="45.5" height="1.500" fill="#6a6a00"/>
<circle cx="373.2" cy="162.7" r="34.600" fill="#000" filter="url(#blur1)"/>
<circle cx="372.5" cy="163.5" r="13" fill="url(#ghl)"/>
<rect x="10.5" y="10.5" width="732.0" height="459.0" fill="none" stroke="#000" stroke-width="1" stroke-dasharray="1 1" shape-rendering="crispEdges" clip-path="url(#cpAbove)"/>
<g clip-path="url(#cpBelow)"><rect x="10.5" y="10.5" width="732.0" height="459.0" fill="none" stroke="#f0f0f0" stroke-width="1" stroke-dasharray="1 1" shape-rendering="crispEdges"/></g>
<path d="M0 344.5 H753" stroke="#4848e0" stroke-width="1"/>
<path d="M207.5 344.5 H333.0 M422.0 344.5 H541.6" stroke="#c8c820" stroke-width="1"/>
<path d="M165.0 379.2 A299.1 299.1 0 0 1 582.4 377.5" fill="none" stroke="#10e010" stroke-width="1.600"/>
<path d="M207.5 344.5 L274.5 298.0 M541.6 344.5 L474.3 298.0" stroke="#8838e8" stroke-width="1.200"/>
<path d="M236.0 344.5 Q235.0 336.0 231.0 329.0 M513.0 344.5 Q514.0 336.0 518.0 329.0" fill="none" stroke="#20d8e8" stroke-width="1"/>
<text x="225.5" y="338.5" font-family="Liberation Mono" font-weight="bold" font-size="13.500" fill="#f070e0" textLength="28" lengthAdjust="spacingAndGlyphs">34.6</text>
<text x="493.5" y="338.5" font-family="Liberation Mono" font-weight="bold" font-size="13.500" fill="#f070e0" textLength="28" lengthAdjust="spacingAndGlyphs">34.3</text>

</svg>

<div class="abs" style="left:1317px;top:4px;width:20px;height:76px;background:linear-gradient(90deg,#f4f4f4,#e6e6e6);border:1px solid #b4b4b4;border-right:none"></div>
<div class="abs" style="left:1319px;top:8px;width:14px;height:70px;font-family:'Liberation Mono',monospace;font-size:11px;writing-mode:vertical-rl;line-height:14px;color:#333;letter-spacing:-0.650px">Settings</div>

<div id="status">
<span class="abs" style="left:5px;top:3px">Ready</span>
<span class="abs" style="left:1068px;top:3px;letter-spacing:-0.3px">[699, 215] 255</span>
<span class="abs" style="left:1176px;top:3px;letter-spacing:-0.2px">00:03:37</span>
<span class="abs" style="left:1258px;top:3px;letter-spacing:-0.1px">18.2 fps</span>
<span class="abs" style="left:1172px;top:2px;width:1px;height:15px;background:#d8d8d8"></span><span class="abs" style="left:1252px;top:2px;width:1px;height:15px;background:#d8d8d8"></span><span class="abs" style="left:1318px;top:2px;width:1px;height:15px;background:#d8d8d8"></span>
<svg class="abs" style="left:1323px;top:6px" width="11" height="11" viewBox="0 0 11 11"><g fill="#b0b0b0"><rect x="8" y="8" width="2" height="2"/><rect x="8" y="4.5" width="2" height="2"/><rect x="8" y="1" width="2" height="2"/><rect x="4.5" y="8" width="2" height="2"/><rect x="4.500" y="4.500" width="2" height="2"/><rect x="1" y="8" width="2" height="2"/></g></svg>
</div>
<svg class="abs" style="left:1100px;top:560px;pointer-events:none" width="236" height="177" viewBox="0 0 236 177">
<g opacity="0.300" fill="#c4c4c4" stroke="none" transform="translate(40 146) rotate(-28.500)">
<text x="0" y="0" font-family="Liberation Sans" font-weight="bold" font-size="56" textLength="88" lengthAdjust="spacingAndGlyphs">NB</text>
<path d="M92 -2 Q104 -6 104 -28 Q104 -52 116 -52 Q128 -52 126 -36 Q124 -20 112 -22 Q118 -6 140 -6" fill="none" stroke="#c4c4c4" stroke-width="6"/>
<text x="138" y="0" font-family="Liberation Sans" font-weight="bold" font-size="56" textLength="56" lengthAdjust="spacingAndGlyphs">SI</text>
<rect x="0" y="8" width="205" height="3"/>
<text x="28" y="30" font-family="Liberation Sans" font-size="16" textLength="178" lengthAdjust="spacingAndGlyphs">Exploring New Boundaries</text>
</g></svg>
</body></html>
